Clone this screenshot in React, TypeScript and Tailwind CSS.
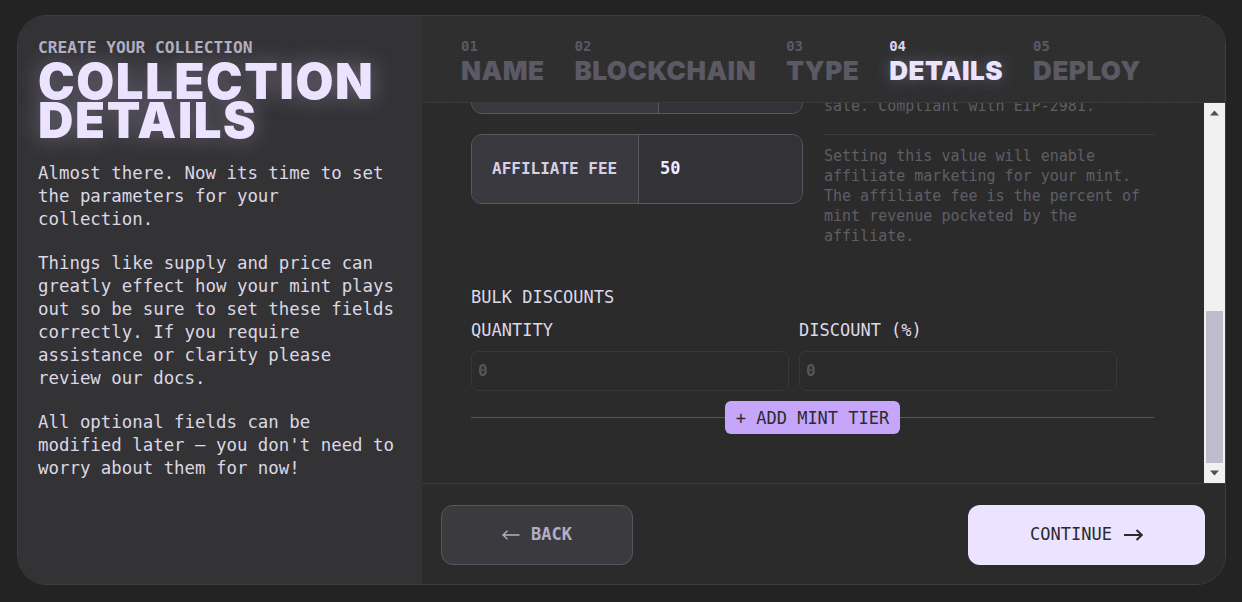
import React from "react";

const mono = "font-['DejaVu_Sans_Mono','Liberation_Mono',monospace]";
const heavy = "font-['Inter','Noto_Sans',sans-serif] font-black";

const tabs = [
  { n: "01", label: "NAME" },
  { n: "02", label: "BLOCKCHAIN" },
  { n: "03", label: "TYPE" },
  { n: "04", label: "DETAILS", active: true },
  { n: "05", label: "DEPLOY" },
];

function FieldRow({
  label,
  value,
  labelW,
  desc,
  className = "",
}: {
  label: string;
  value: string;
  labelW: string;
  desc: React.ReactNode;
  className?: string;
}) {
  return (
    <div className={`flex gap-[21px] ${className}`}>
      <div className="flex h-[70px] w-[332px] shrink-0 overflow-hidden rounded-[11px] border border-[#5a5962]">
        <div
          className={`flex items-center border-r border-[#5a5962] bg-[#3a393f] pl-[20px] ${labelW}`}
        >
          <span className={`${mono} text-[16px] font-bold text-[#d6d0e4]`}>{label}</span>
        </div>
        <div className="flex flex-1 items-center bg-[#333237] pl-[21px]">
          <span className={`${mono} text-[17px] font-bold text-[#f0eaff]`}>{value}</span>
        </div>
      </div>
      <div
        className={`${mono} w-[332px] border-t border-[#3b3b3d] pt-[11px] text-[15px] leading-[20px] text-[#5f5e66]`}
      >
        {desc}
      </div>
    </div>
  );
}

export default function App() {
  return (
    <div className="h-[602px] w-[1242px] overflow-hidden bg-[#232323] pl-[17px] pt-[15px]">
      <div className="flex h-[570px] w-[1209px] overflow-hidden rounded-[30px] border border-[#3e3e41]">
        {/* Left panel */}
        <div className="w-[404px] shrink-0 bg-[#333336] px-[20px] pt-[22px]">
          <div className={`${mono} text-[16.2px] font-bold leading-[20px] text-[#b3aebf]`}>
            CREATE YOUR COLLECTION
          </div>
          <h1
            className={`${heavy} mt-[4px] text-[49px] leading-[39px] tracking-[1.6px] text-[#ece4ff] [text-shadow:0_0_22px_rgba(220,210,255,0.35)]`}
          >
            COLLECTION
            <br />
            DETAILS
          </h1>
          <div className={`${mono} mt-[22px] flex flex-col gap-[21px] text-[17.4px] leading-[23px] text-[#dcd7e4]`}>
            <p>Almost there. Now its time to set the parameters for your collection.</p>
            <p>
              Things like supply and price can greatly effect how your mint plays out so be sure to set
              these fields correctly. If you require assistance or clarity please review our docs.
            </p>
            <p>All optional fields can be modified later — you don't need to worry about them for now!</p>
          </div>
        </div>

        {/* Right panel */}
        <div className="flex min-w-0 flex-1 flex-col bg-[#2b2b2b]">
          {/* Header tabs */}
          <div className="flex h-[87px] shrink-0 gap-[30px] border-b border-[#3a3a3c] bg-[#2e2e2f] bg-[radial-gradient(rgba(255,255,255,0.035)_1px,transparent_1px)] bg-[size:3px_3px] pl-[39px] pt-[22px]">
            {tabs.map((t) => (
              <div key={t.n} className="flex flex-col">
                <span
                  className={`${mono} text-[14px] font-bold leading-[16px] ${
                    t.active ? "text-[#dcd6ea]" : "text-[#5b5963]"
                  }`}
                >
                  {t.n}
                </span>
                <span
                  className={`${heavy} mt-[2px] text-[26px] leading-[30px] tracking-[0.5px] ${
                    t.active
                      ? "text-[#ece4ff] [text-shadow:0_0_16px_rgba(220,210,255,0.3)]"
                      : "text-[#5b5963]"
                  }`}
                >
                  {t.label}
                </span>
              </div>
            ))}
          </div>

          {/* Scroll area */}
          <div className="flex min-h-0 flex-1">
            <div className="min-w-0 flex-1 overflow-hidden pl-[49px] pr-[50px]">
              <div className="-mt-[59px] flex flex-col">
                <FieldRow
                  label="ROYALTIES"
                  value="5"
                  labelW="w-[187px]"
                  desc={
                    <>
                      The percentage of revenue you will earn from every secondary market sale. Compliant with
                      EIP-2981.
                    </>
                  }
                />
                <FieldRow
                  className="mt-[18px]"
                  label="AFFILIATE FEE"
                  value="50"
                  labelW="w-[167px]"
                  desc="Setting this value will enable affiliate marketing for your mint. The affiliate fee is the percent of mint revenue pocketed by the affiliate."
                />

                <div className={`${mono} mt-[41px] text-[17px] font-medium leading-[20px] text-[#ddd8ea]`}>
                  BULK DISCOUNTS
                </div>
                <div className="mt-[13px] grid grid-cols-[318px_318px] gap-x-[10px]">
                  <div className={`${mono} text-[17px] font-medium leading-[20px] text-[#ddd8ea]`}>QUANTITY</div>
                  <div className={`${mono} text-[17px] font-medium leading-[20px] text-[#ddd8ea]`}>
                    DISCOUNT (%)
                  </div>
                  <div className="mt-[11px] flex h-[40px] items-center rounded-[7px] border border-[#38383a] bg-[#2a2a2a] bg-[radial-gradient(rgba(255,255,255,0.03)_1px,transparent_1px)] bg-[size:3px_3px] pl-[6px]">
                    <span className={`${mono} text-[16px] font-bold text-[#56555c]`}>0</span>
                  </div>
                  <div className="mt-[11px] flex h-[40px] items-center rounded-[7px] border border-[#38383a] bg-[#2a2a2a] bg-[radial-gradient(rgba(255,255,255,0.03)_1px,transparent_1px)] bg-[size:3px_3px] pl-[6px]">
                    <span className={`${mono} text-[16px] font-bold text-[#56555c]`}>0</span>
                  </div>
                </div>
                <div className="mt-[10px] flex items-center">
                  <div className="h-px flex-1 bg-[#56555b]" />
                  <button
                    className={`${mono} h-[33px] rounded-[6px] bg-[#c5a6fb] px-[11px] text-[17px] leading-[20px] text-[#2b2b2d]`}
                  >
                    + ADD MINT TIER
                  </button>
                  <div className="h-px flex-1 bg-[#56555b]" />
                </div>
              </div>
            </div>

            {/* Scrollbar drawing */}
            <div className="flex w-[21px] shrink-0 flex-col items-center bg-[#f1f1f1]">
              <div className="flex h-[21px] items-center justify-center">
                <svg width="9" height="6" viewBox="0 0 9 6">
                  <path d="M0 5.5 L4.5 0.5 L9 5.5 Z" fill="#505050" />
                </svg>
              </div>
              <div className="flex w-full flex-1 flex-col px-[2px]">
                <div className="h-[187px]" />
                <div className="h-[152px] w-full bg-[#c0bccb]" />
              </div>
              <div className="flex h-[21px] items-center justify-center">
                <svg width="9" height="6" viewBox="0 0 9 6">
                  <path d="M0 0.5 L4.5 5.5 L9 0.5 Z" fill="#505050" />
                </svg>
              </div>
            </div>
          </div>

          {/* Footer */}
          <div className="flex h-[101px] shrink-0 items-center justify-between border-t border-[#3a3a3c] pl-[19px] pr-[20px]">
            <button className="mt-[2px] flex h-[60px] w-[192px] items-center justify-center gap-[11px] rounded-[12px] border border-[#58575e] bg-[#3b3b3f]">
              <svg width="18" height="10" viewBox="0 0 18 10" fill="none">
                <path d="M17.5 5 H1 M5.5 0.8 L1 5 L5.5 9.2" stroke="#b4aec4" strokeWidth="1.3" />
              </svg>
              <span className={`${mono} text-[17px] font-bold text-[#b4aec4]`}>BACK</span>
            </button>
            <button className="mt-[2px] flex h-[60px] w-[237px] items-center justify-center gap-[12px] rounded-[12px] bg-[#ebe3ff]">
              <span className={`${mono} text-[17px] font-medium text-[#2a2a2c]`}>CONTINUE</span>
              <svg width="19" height="12" viewBox="0 0 19 12" fill="none">
                <path d="M0 6 H17.5 M12.5 1 L17.8 6 L12.5 11" stroke="#2a2a2c" strokeWidth="2" />
              </svg>
            </button>
          </div>
        </div>
      </div>
    </div>
  );
}
